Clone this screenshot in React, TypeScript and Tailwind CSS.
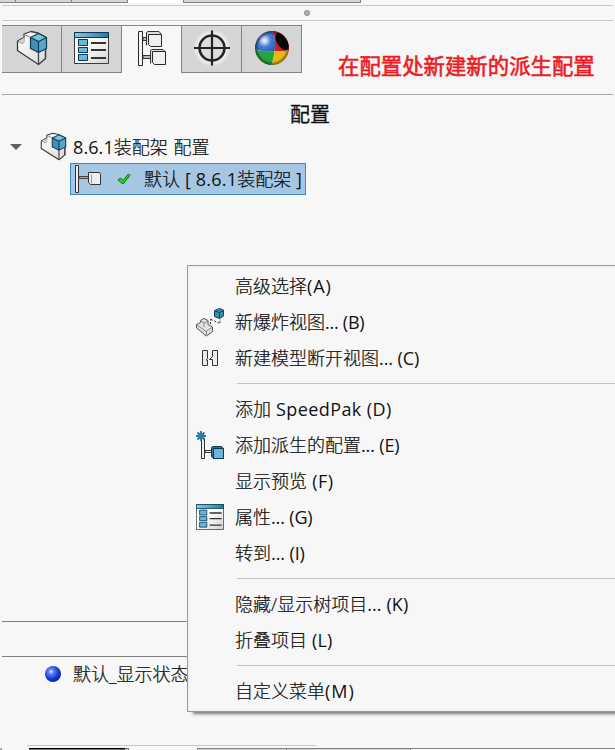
import { ReactNode } from "react";

const FONT = "font-['Open_Sans','Noto_Sans_CJK_SC',sans-serif]";
const THIN = "font-light [-webkit-text-stroke:0.2px_#000]";
const LATIN = "font-normal [-webkit-text-stroke:0px]";

function PartIcon({ className }: { className: string }) {
  return (
    <svg className={className} viewBox="0 0 32 36" preserveAspectRatio="none">
      <defs>
        <linearGradient id="partBody" x1="0" y1="0" x2="1" y2="1">
          <stop offset="0" stopColor="#fff" />
          <stop offset="1" stopColor="#dadada" />
        </linearGradient>
      </defs>
      <path d="M1.500 11 8 7.500V4L15 1.500 22 3 29.500 7V28.500L22.500 34.500 1.500 20.500Z" fill="url(#partBody)" stroke="#3a3a3a" strokeWidth="1.300" strokeLinejoin="round" />
      <path d="M1.500 11 6 13.500 8 12V5M8 4.500l6 2.500" fill="none" stroke="#8a8a8a" strokeWidth="1" />
      <path d="M3 10.500 8 8v3.500L6 13Z" fill="#d0d0d0" />
      <path d="M22.500 34.500V22M29.500 18v10.500" fill="none" stroke="#444" strokeWidth="1.300" />
      <path d="M22.500 3.500 30.500 7.500 22.500 11.500 14.500 7.500Z" fill="#7cc3dd" />
      <path d="M14.500 7.500 22.500 11.500V22.500L14.500 18.500Z" fill="#438fb3" />
      <path d="M30.500 7.500 22.500 11.500V22.500L30.500 18.500Z" fill="#5ba5c6" />
      <path d="M22.500 3.500 30.500 7.500v11l-8 4-8-4v-11ZM14.500 7.500l8 4 8-4M22.500 11.500v11" fill="none" stroke="#0c3a52" strokeWidth="1.200" strokeLinejoin="round" />
    </svg>
  );
}

function PropertyIcon({ className }: { className: string }) {
  return (
    <svg className={className} viewBox="0 0 35 32" preserveAspectRatio="none">
      <defs>
        <linearGradient id="propHead">
          <stop stopColor="#91c9df" />
          <stop offset="1" stopColor="#2878a0" />
        </linearGradient>
        <linearGradient id="propBody" x2="1" y2="1">
          <stop offset=".4" stopColor="#fff" />
          <stop offset="1" stopColor="#d2d2ce" />
        </linearGradient>
      </defs>
      <path d="M.5.5h34v31H.5Z" fill="url(#propBody)" stroke="#3c3c3c" />
      <path d="M.5.5h34v5H.5Z" fill="url(#propHead)" stroke="#053957" />
      <path d="M4.500 7.500h9v6h-9ZM4.500 15.500h9v5h-9ZM4.500 22.500h9v6h-9Z" fill="#6cb6d8" stroke="#053957" />
      <path d="M17 11h15M17 18h15M17 26h15" stroke="#333" strokeWidth="1.800" />
    </svg>
  );
}

function ConfigIcon() {
  return (
    <svg className="h-9 w-[30px]" viewBox="137 30 30 36">
      <path d="M143 37.500h4v3h-4ZM143 55.500h8v3h-8Z" fill="#bbb" stroke="#333" />
      <path d="M138.500 31.500h4v34h-4Z" fill="#f4f4f4" stroke="#292929" />
      <path d="M146.500 45.500v-13l1.500-1h11l2 2.500M150.500 63.500v-13l1.500-1h11l2 2" fill="#ddd" stroke="#333" />
      <path d="M148.500 34.500h13v12h-11l-2-2ZM152.500 51.500h13v13h-11l-2-2Z" fill="#f0f0f0" stroke="#292929" />
    </svg>
  );
}

function TargetIcon() {
  return (
    <svg className="mb-0.5 h-10 w-10" viewBox="0 0 40 40">
      <defs>
        <radialGradient id="halo">
          <stop offset=".6" stopColor="#fff" /><stop offset="1" stopColor="#fff" stopOpacity="0" />
        </radialGradient>
      </defs>
      <circle cx="20" cy="20" r="19" fill="url(#halo)" />
      <circle cx="20" cy="20" r="12.500" fill="#dcdcdc" stroke="#262626" strokeWidth="2.600" />
      <path d="M20 2.500v35M2 20h36" stroke="#222" strokeWidth="2.200" />
    </svg>
  );
}

function AppearanceIcon() {
  return (
    <svg className="mb-0.5 h-9 w-9" viewBox="0 0 36 36">
      <defs>
        <clipPath id="ball"><circle cx="18" cy="18" r="17" /></clipPath>
        <radialGradient id="ballBlue" gradientUnits="userSpaceOnUse" cx="10.500" cy="10.500" r="14">
          <stop stopColor="#f4f8ff" /><stop offset=".2" stopColor="#b5cdf0" /><stop offset=".45" stopColor="#4a80d0" /><stop offset="1" stopColor="#1f55b4" />
        </radialGradient>
        <radialGradient id="ballShade">
          <stop offset=".78" stopOpacity="0" /><stop offset="1" stopOpacity=".5" />
        </radialGradient>
      </defs>
      <g clipPath="url(#ball)">
        <path d="M0 0h19q3 9 1.500 21Q8 22 0 19Z" fill="url(#ballBlue)" />
        <path d="M19 0h17v20q-8 2-15.500 1Q22 9 19 0Z" fill="#c81d2b" />
        <path d="M0 19.500q9 2.500 20.500 1.500-.5 8-3.500 15H0Z" fill="#27a33c" />
        <path d="M20.500 21Q29 22 36 20v16H17q3-8 3.500-15Z" fill="#e6b915" />
        <ellipse cx="28" cy="11.500" rx="5" ry="9.500" transform="rotate(-32 28 11.500)" fill="#050505" />
      </g>
      <circle cx="18" cy="18" r="17" fill="url(#ballShade)" />
    </svg>
  );
}

function ExplodeIcon() {
  return (
    <svg className="h-[29px] w-7" viewBox="196 307 28 29">
      <path d="M196.500 323.500l4-2v-2l3.500-2 4 2v4l4.500 2.500v4.500l-6 4.500-10-8Z" fill="#e3e3e3" stroke="#555" strokeLinejoin="round" />
      <path d="M197 324l9 6.500 6-4M206.500 330.500v4M200.500 320l3.500 2 4-2M204 322v4" fill="none" stroke="#888" />
      <path d="M210.500 323v-5M211 318.500l9 4v-5" fill="none" stroke="#333" strokeDasharray="2 1.500" />
      <path d="M214.500 309.500l5-2 4 1.500v6l-4 2.500-5-2Z" fill="#3c8bb0" stroke="#0c4560" />
      <path d="M215 310l4.500 1.500 4-2M219.500 311.500v5.500" fill="none" stroke="#0c4560" />
    </svg>
  );
}

function BreakIcon() {
  return (
    <svg className="h-[18px] w-[18px]" viewBox="201 349 18 18">
      <path d="M202.500 350.500h5v8l-1.500 1.500h1.500v5.500h-5ZM217.500 350.500h-5v6l-3 3h3v6h5Z" fill="#ececec" stroke="#333" />
    </svg>
  );
}

function DeriveIcon() {
  return (
    <svg className="h-[29px] w-7" viewBox="196 431 28 29">
      <path d="M201.500 438.500h3v20h-3Z" fill="#eee" stroke="#333" />
      <path d="M205 450.500h7v2h-7Z" fill="#eee" stroke="#333" />
      <path d="M211.500 447.500l1-1h9l2 2v10h-10l-2-2Z" fill="#2a789d" stroke="#073b55" />
      <path d="M213.500 448.500h10v10h-10Z" fill="#6bb6d8" stroke="#073b55" />
      <path d="M201 431v10M196 436h10M197.500 432.500l7 7M204.500 432.500l-7 7" stroke="#237399" strokeWidth="1.800" />
      <circle cx="201" cy="436" r="3" fill="#2e7fa5" />
    </svg>
  );
}

type Item = { label: string; tail: string; tracking: string; icon?: ReactNode };

const groups: Item[][] = [
  [
    { label: "高级选择", tail: "(A)", tracking: "tracking-[0.9px]" },
    { label: "新爆炸视图", tail: "... (B)", tracking: "tracking-[-0.25px]", icon: <ExplodeIcon /> },
    { label: "新建模型断开视图", tail: "... (C)", tracking: "tracking-[-0.1px]", icon: <BreakIcon /> },
  ],
  [
    { label: "添加", tail: " SpeedPak (D)", tracking: "tracking-[0.4px]" },
    { label: "添加派生的配置", tail: "... (E)", tracking: "tracking-[-0.15px]", icon: <DeriveIcon /> },
    { label: "显示预览", tail: " (F)", tracking: "tracking-[0.5px]" },
    { label: "属性", tail: "... (G)", tracking: "tracking-[-0.15px]", icon: <PropertyIcon className="h-[26px] w-7" /> },
    { label: "转到", tail: "... (I)", tracking: "tracking-[-0.1px]" },
  ],
  [
    { label: "隐藏/显示树项目", tail: "... (K)", tracking: "tracking-[0.1px]" },
    { label: "折叠项目", tail: " (L)", tracking: "tracking-[0.2px]" },
  ],
  [{ label: "自定义菜单", tail: "(M)", tracking: "tracking-[1px]" }],
];

function ContextMenu() {
  return (
    <div className="absolute top-[265px] left-[187px] h-[447px] w-[440px] border border-[#999] bg-[#f7f7f7] shadow-[5px_3px_3px_-1px_#777]">
      <div className="h-full border-2 border-[#f1f1f1]">
        {groups.map((group, g) => (
          <div key={g}>
            {g > 0 && <div className="flex h-[15px] pt-[7px] pl-[47px]"><div className="h-px w-full bg-[#c5c5c5]" /></div>}
            {group.map((item) => (
              <div key={item.label} className="flex h-9 items-center">
                <div className="flex w-[45px] shrink-0 justify-center pr-[5px]">{item.icon}</div>
                <span className={`whitespace-pre ${THIN}`}>{item.label}<span className={`${LATIN} ${item.tracking}`}>{item.tail}</span></span>
              </div>
            ))}
          </div>
        ))}
      </div>
    </div>
  );
}

export default function App() {
  return (
    <div className={`relative flex h-[750px] w-[615px] flex-col overflow-hidden bg-[#f7f7f7] text-[18px] leading-6 text-[#111] ${FONT}`}>
      <div className="flex h-[3px]">
        <div className="w-4 border-r border-b border-[#848484] bg-[#d5d5d5]" />
        <div className="w-14 border-r border-b border-[#848484] bg-[#d5d5d5]" />
        <div className="w-14 border-r border-b border-[#848484] bg-[#d5d5d5]" />
        <div className="w-[55px] bg-white" />
        <div className="w-[178px] border-x border-b border-[#848484] bg-[#d5d5d5]" />
      </div>
      <div className="mt-0.5 mr-0.5 ml-0.5 flex h-4 items-center justify-center border-y border-[#c8c8c8] pr-0.5">
        <div className="h-1.5 w-1.5 rounded-full border border-[#888] bg-[#b5b5b5]" />
      </div>
      <div className="mt-1 flex h-12">
        <div className="ml-0.5 flex w-[300px]">
          <div className="flex w-[60px] items-center justify-center border-y border-r border-[#848484] bg-[#d5d5d5]"><PartIcon className="mb-0.5 h-9 w-8" /></div>
          <div className="flex w-[60px] items-center justify-center border-y border-r border-[#848484] bg-[#d5d5d5]"><PropertyIcon className="mb-0.5 h-8 w-[35px]" /></div>
          <div className="flex w-[59px] items-center justify-center border-t border-[#848484] bg-[#f7f7f7]"><div className="mb-[3px]"><ConfigIcon /></div></div>
          <div className="flex w-[61px] items-center justify-center border border-[#848484] bg-[#d5d5d5]"><TargetIcon /></div>
          <div className="flex w-[60px] items-center justify-center border-y border-r border-[#848484] bg-[#d5d5d5]"><AppearanceIcon /></div>
        </div>
        <div className="mt-[25px] ml-9 text-[21.400px] leading-8 whitespace-nowrap text-[#ed1c24] [-webkit-text-stroke:0.6px_#ed1c24]">在配置处新建新的派生配置</div>
      </div>
      <div className="mx-0.5 mt-[21px] h-px bg-[#a8a8a8]" />
      <div className="mt-[6px] ml-[5px] h-7 text-center text-[20px] leading-7 [-webkit-text-stroke:0.3px_#111]">配置</div>
      <div className="mt-[2px] flex h-8 items-center">
        <div className="ml-2.5 h-0 w-0 border-x-[6px] border-t-[6px] border-x-transparent border-t-[#606060]" />
        <PartIcon className="mb-px ml-[18px] h-[29px] w-[27px]" />
        <span className={`ml-[6px] whitespace-pre ${THIN}`}><span className={`tracking-[0.1px] ${LATIN}`}>8.6.1</span>装配架<span className="tracking-[1px]"> </span>配置</span>
      </div>
      <div className="ml-[70px] flex h-8 w-[236px] items-center border border-[#3f89bc] bg-[#a6c7e3]">
        <svg className="ml-1 h-7 w-[27px]" viewBox="75 165 27 28">
          <path d="M75.500 165.500h3v27h-3Z" fill="#eee" stroke="#333" />
          <path d="M79 176.500h10v2H79Z" fill="#aaa" stroke="#444" />
          <path d="M88.500 172.500h11l1 2v10h-10l-2-2Z" fill="#eee" stroke="#333" />
          <path d="M91.500 174.500v9" stroke="#999" />
        </svg>
        <svg className="ml-[15px] h-3 w-[14px]" viewBox="0 0 14 12">
          <path d="M1 7 3.500 5 6 7.500 11.500 1 13 2.500 6 11Z" fill="#22df22" stroke="#076c12" />
        </svg>
        <span className={`ml-[13px] whitespace-pre ${THIN}`}>默认<span className={`tracking-[0.2px] ${LATIN}`}> [ 8.6.1</span>装配架<span className={`tracking-[0.2px] ${LATIN}`}> ]</span></span>
      </div>
      <div className="mx-0.5 mt-[426px] h-px shrink-0 bg-[#808080]" />
      <div className="mx-0.5 mt-[34px] h-px shrink-0 bg-[#808080]" />
      <div className="mt-[5px] flex h-6 items-center">
        <div className="ml-[45px] h-4 w-4 rounded-full bg-[radial-gradient(circle_at_38%_35%,#e8eeff_0%,#5d80f5_18%,#173bda_50%,#0b229a_72%,#7992ed_82%,#1735c4_100%)]" />
        <span className={`ml-3 ${THIN}`}>默认_显示状态</span>
      </div>
      <div className="mt-auto ml-[27px] h-px w-[289px] bg-[#c8c8c8]" />
      <div className="mt-0.5 flex h-0.5">
        <div className="w-0.5 bg-[#94b9bd]" />
        <div className="ml-[27px] w-[96px] border-t border-black bg-[#70737c]" />
        <div className="w-1 border-t border-r border-[#777] bg-[#ccc]" />
        <div className="ml-[68px] w-[90px] border-t border-x border-[#808080] bg-[#d5d5d5]" />
        <div className="w-[124px] border-t border-r border-[#808080] bg-[#d5d5d5]" />
        <div className="flex-1 border-t border-[#808080] bg-white" />
      </div>
      <ContextMenu />
    </div>
  );
}
